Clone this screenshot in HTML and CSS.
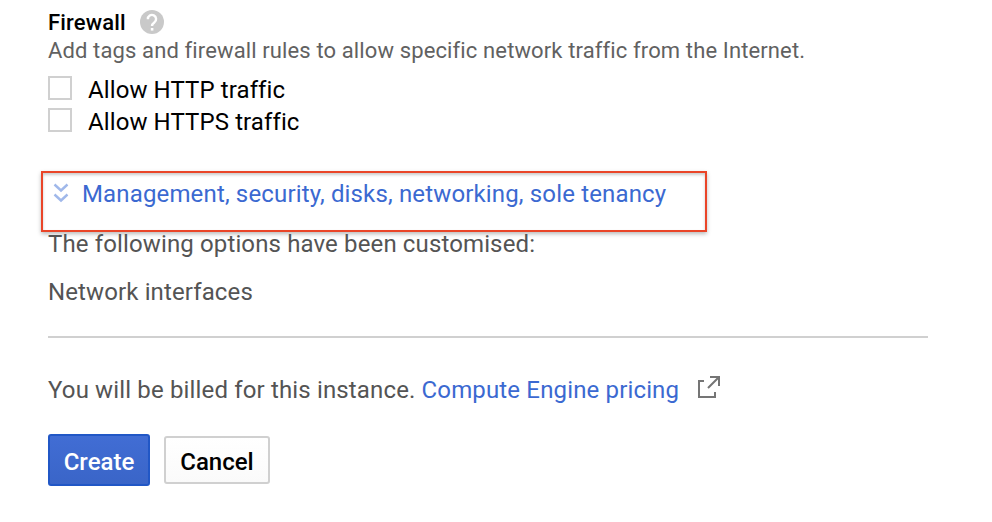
FILE: index.html
```html
<!DOCTYPE html>
<html lang="en">
<head>
<meta charset="utf-8">
<title>Create an instance</title>
<link rel="stylesheet" href="styles.css">
</head>
<body>
<main class="form">
  <div class="heading"><h2>Firewall</h2>
    <svg class="help" viewBox="0 0 24 24"><circle cx="12" cy="12" r="12" fill="#c9c9c9"/><path d="M7.9 9.2a4.1 4.1 0 1 1 6.4 3.2c-1.4 1-2.3 1.8-2.3 3.6" fill="none" stroke="#fff" stroke-width="2.4"/><path d="M10.8 18h2.6v2.6h-2.6z" fill="#fff"/></svg>
  </div>
  <p class="hint">Add tags and firewall rules to allow specific network traffic from the Internet.</p>
  <label class="check"><span class="box"></span><span>Allow HTTP traffic</span></label>
  <label class="check"><span class="box"></span><span>Allow HTTPS traffic</span></label>
  <a class="expander">
    <svg class="chevrons" viewBox="0 0 16 20"><path d="M1.5 1.5L8 7.5l6.5-6M1.5 11.5l6.5 6 6.5-6" fill="none" stroke="#a0b8ea" stroke-width="2.4"/></svg>
    <span>Management, security, disks, networking, sole tenancy</span>
  </a>
  <p class="custom">The following options have been customised:</p>
  <p class="option">Network interfaces</p>
  <hr>
  <p class="billing"><span>You will be billed for this instance.</span> <a>Compute Engine pricing</a>
    <svg class="external" viewBox="0 0 24 24"><path d="M7 5H2v16h16v-5M13 1h9v9M22 1L11 12" fill="none" stroke="#757575" stroke-width="2"/></svg>
  </p>
  <div class="actions"><button class="create">Create</button><button class="cancel">Cancel</button></div>
</main>
</body>
</html>
```
FILE: styles.css
```css
* { box-sizing: border-box; }
body { margin: 0; background: #fff; font-family: Roboto, sans-serif; font-size: 24px; letter-spacing: .15px; color: #545454; }
h2, p { margin: 0; font-weight: 400; }
.form { padding: 8px 64px 0 48px; white-space: nowrap; }
.heading { display: flex; align-items: center; height: 28px; gap: 14px; }
h2 { font-size: 22px; font-weight: 500; color: #000; }
.help { width: 24px; height: 24px; }
.hint { height: 36px; line-height: 30px; font-size: 22px; letter-spacing: .125px; color: #616161; }
.check { display: flex; gap: 16px; height: 32px; line-height: 37px; letter-spacing: .1px; color: #000; }
.box { width: 24px; height: 24px; margin-top: 4px; border: 2px solid #d0d0d0; }
.expander { display: flex; align-items: flex-start; gap: 13px; width: 666px; height: 61px; margin: 35px 0 0 -7px; padding: 9px 0 0 10px; border: 2px solid #ea4528; color: #3b69d1; line-height: 24px; box-shadow: 0 2px 4px #bbb, inset 0 2px 3px #ccc; }
.chevrons { width: 16px; height: 20px; margin-top: 1px; }
.custom { line-height: 24px; letter-spacing: .13px; }
.option { margin-top: 22px; line-height: 28px; letter-spacing: .12px; }
hr { height: 2px; margin: 30px 0 0; border: 0; background: #d0d0d0; }
.billing { display: flex; align-items: center; gap: 6px; height: 28px; margin-top: 38px; }
.billing a { color: #3b69d1; }
.external { width: 24px; height: 24px; margin: -4px 0 0 12px; }
.actions { display: flex; align-items: center; gap: 14px; margin-top: 30px; }
button { padding: 4px 0 0; border-radius: 3px; font: 500 24px Roboto, sans-serif; }
.create { width: 102px; height: 52px; border: 2px solid #2157c6; background: linear-gradient(#416dd4, #3a65c8); color: #fff; }
.cancel { width: 106px; height: 48px; border: 2px solid #d0d0d0; background: linear-gradient(#fff, #fafafa); color: #000; }
```
